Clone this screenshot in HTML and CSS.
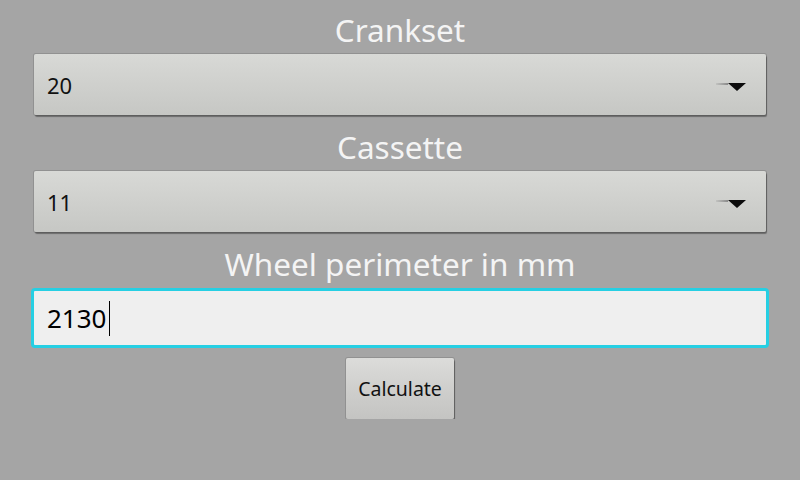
FILE: index.html
```html
<!DOCTYPE html>
<html lang="en">
<head>
  <meta charset="UTF-8" />
  <title>Gear calculator</title>
  <link rel="stylesheet" href="styles.css">
</head>
<body>
  <div class="container">
    <div class="label">Crankset</div>
    <div class="spinner">
      <span class="value">20</span>
      <span class="arrow"></span>
    </div>

    <div class="label">Cassette</div>
    <div class="spinner">
      <span class="value">11</span>
      <span class="arrow"></span>
    </div>

    <div class="label">Wheel perimeter in mm</div>
    <div class="field">
      <span class="value">2130</span><span class="cursor"></span>
    </div>

    <div class="actions">
      <button type="button">Calculate</button>
    </div>
  </div>
</body>
</html>
```

FILE: styles.css
```css
body {
  margin: 0;
  background-color: #a5a5a5;
  font-family: "Noto Sans", "Open Sans", sans-serif;
}

.container {
  display: flex;
  flex-direction: column;
  padding: 0 34px;
}

.label {
  padding-top: 6px;
  height: 48px;
  line-height: 48px;
  text-align: center;
  color: #f4f4f4;
  font-size: 31.5px;
}

.spinner {
  display: flex;
  align-items: center;
  justify-content: space-between;
  height: 61px;
  margin-bottom: 2px;
  padding: 0 20px 0 13px;
  background: linear-gradient(#d8d9d6, #cfd0cd 50%, #c6c7c4);
  border-radius: 2px;
  box-shadow: 1px 2px 1px rgba(0,0,0,0.35), 0 0 0 1px rgba(0,0,0,0.12);
}

.value {
  font-size: 22px;
  color: #111;
}

.arrow {
  position: relative;
  width: 0;
  height: 0;
  margin-top: 4px;
  border-left: 9px solid transparent;
  border-right: 9px solid transparent;
  border-top: 8px solid #0c0c0c;
}

.arrow::before {
  content: "";
  position: absolute;
  left: -21px;
  top: -8px;
  width: 12px;
  height: 2px;
  background: linear-gradient(90deg, rgba(140,140,140,0.2), #8a8a8a);
}

.field {
  display: flex;
  align-items: center;
  height: 54px;
  margin: 0 -3px;
  padding: 0 13px;
  background: #efefef;
  border: 3px solid #26cfe3;
  border-radius: 4px;
}

.field .value {
  font-size: 26px;
  color: #000;
}

.cursor {
  width: 1px;
  height: 35px;
  margin-left: 2px;
  background: #000;
}

.actions {
  display: flex;
  justify-content: center;
  margin-top: 10px;
}

button {
  width: 108px;
  height: 61px;
  padding: 0;
  font-family: inherit;
  font-size: 19.5px;
  color: #111;
  background: linear-gradient(#dcdcda, #cfcfcd 50%, #c4c4c2);
  border: none;
  border-radius: 2px;
  box-shadow: 1px 2px 1px rgba(0,0,0,0.35), 0 0 0 1px rgba(0,0,0,0.12);
}
```
